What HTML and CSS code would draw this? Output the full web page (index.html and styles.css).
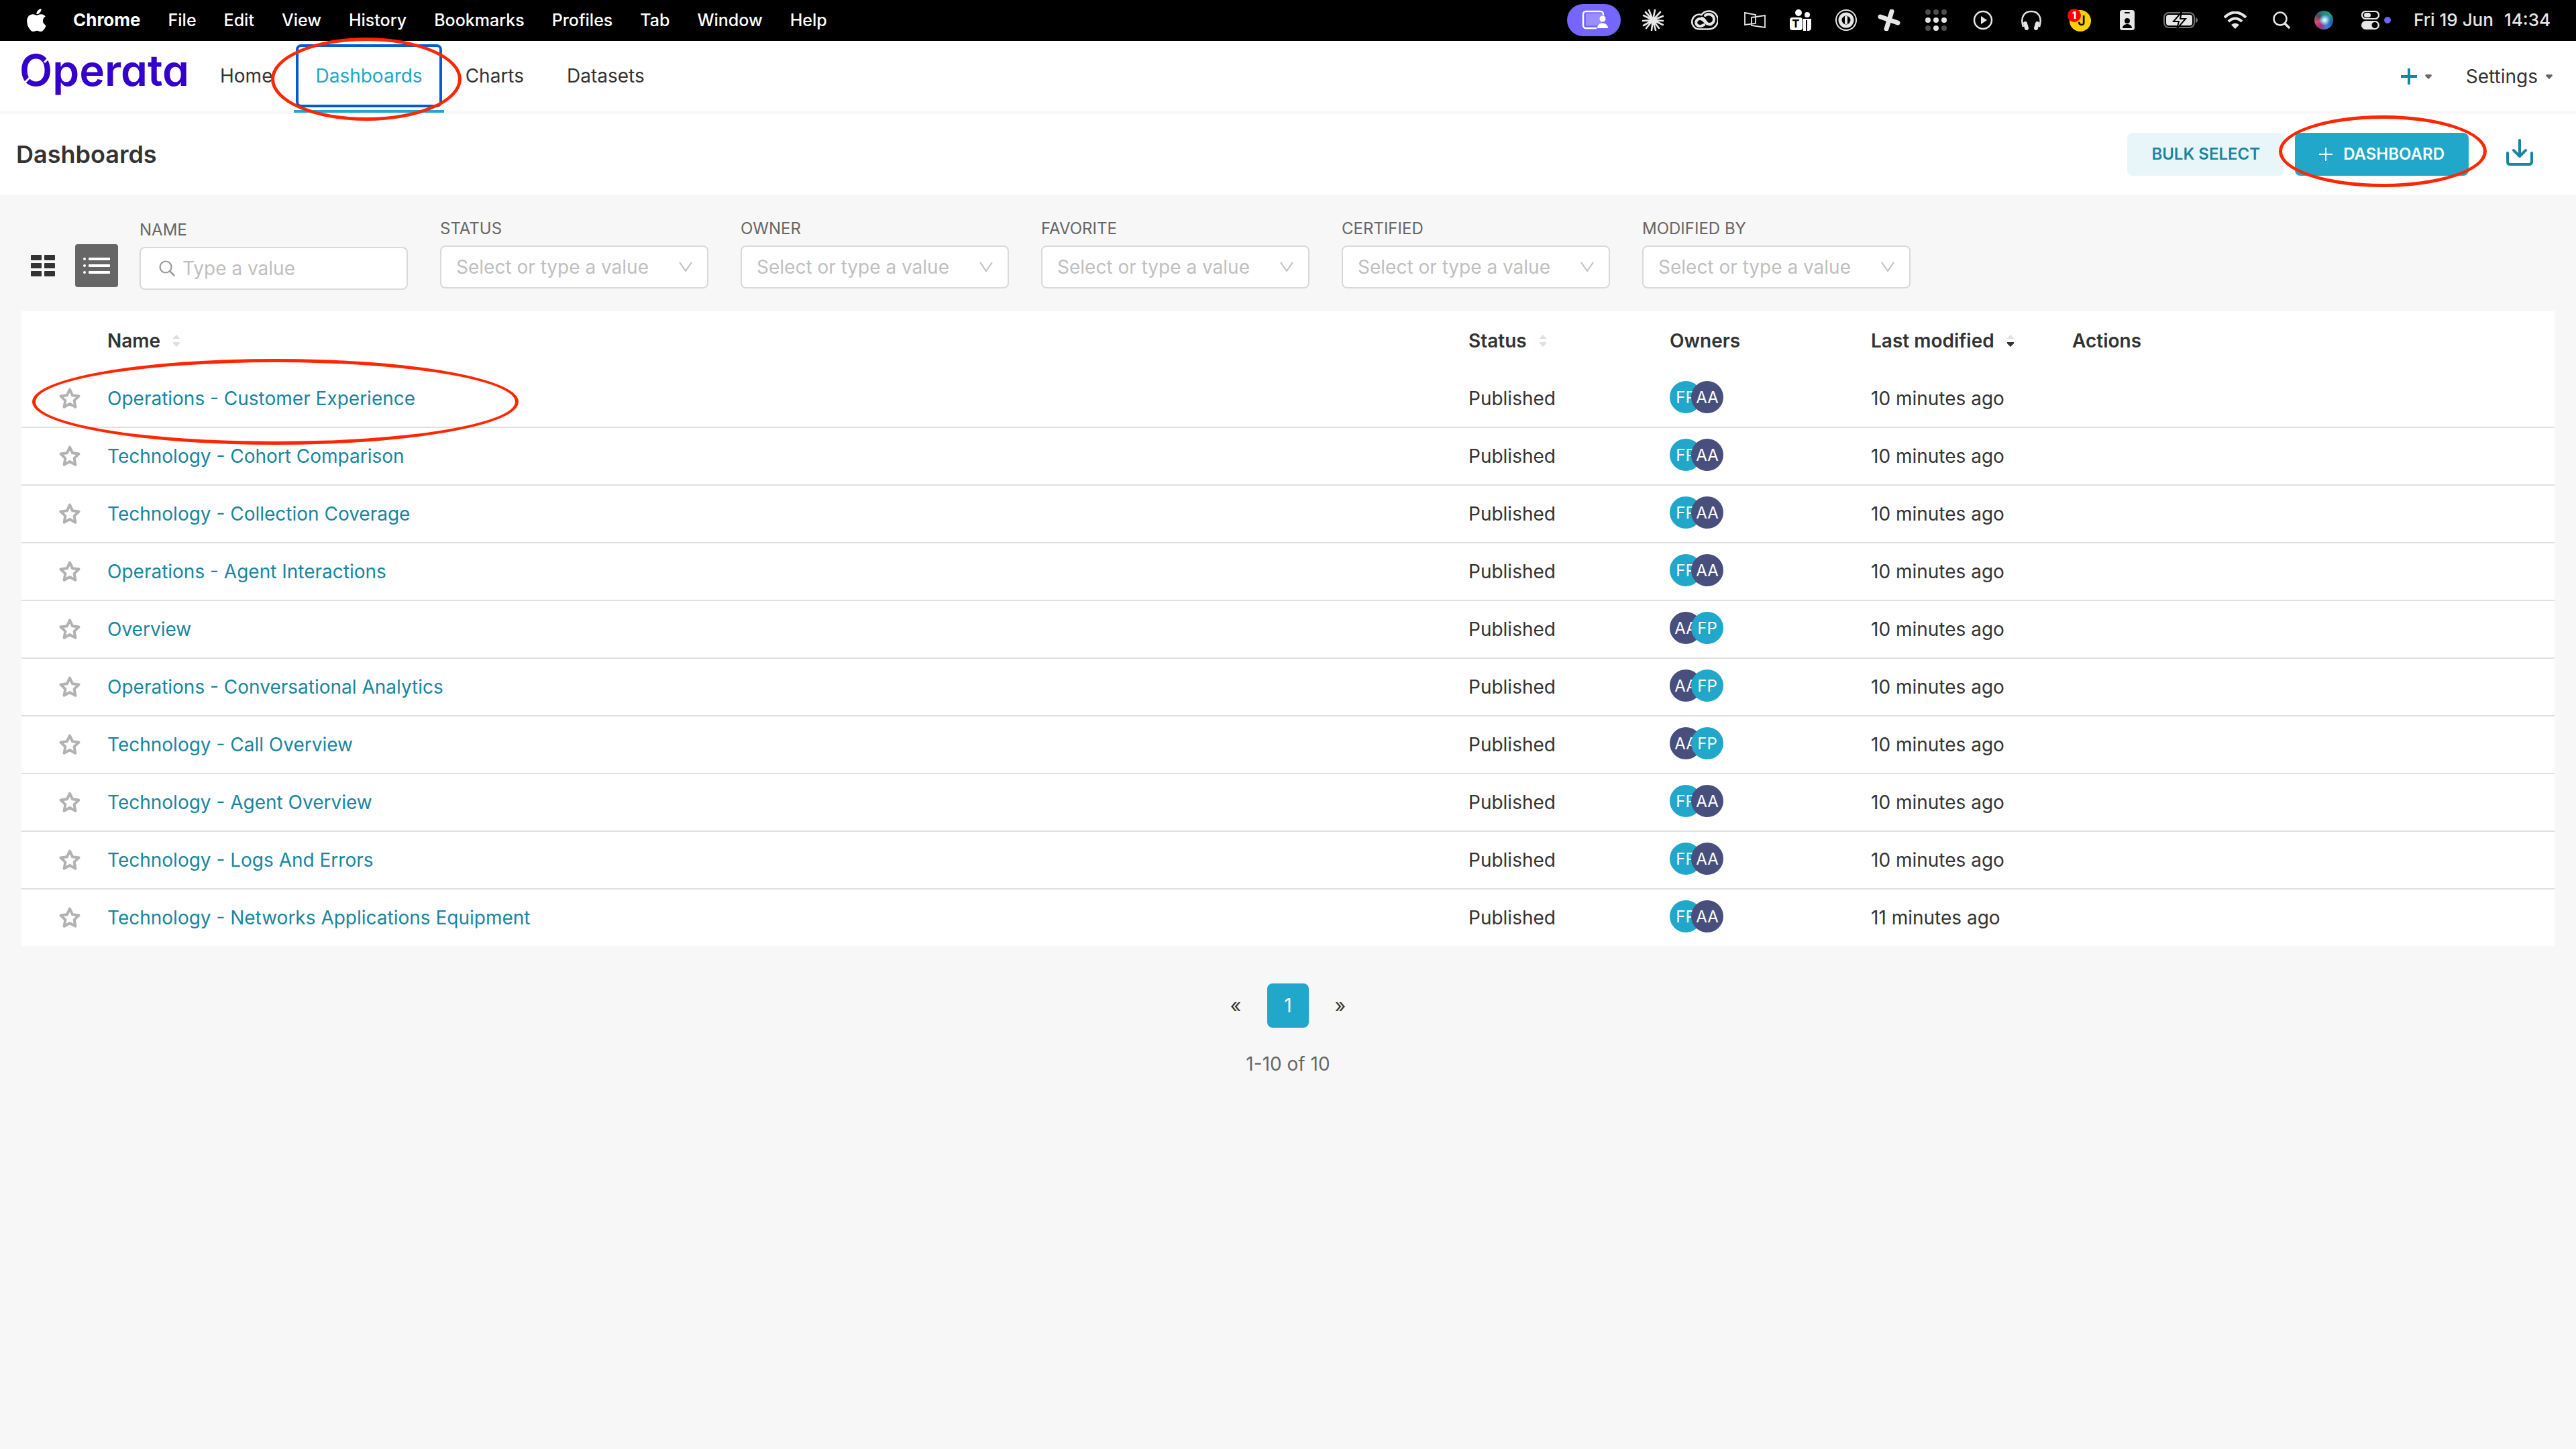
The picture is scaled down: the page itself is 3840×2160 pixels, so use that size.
FILE: index.html
```html
<!DOCTYPE html>
<html lang="en">
<head>
    <meta charset="UTF-8">
    <meta name="viewport" content="width=device-width, initial-scale=1.0">
    <title>Dashboards - Operata</title>
    <link rel="stylesheet" href="styles.css">
</head>
<body>
    <!-- shared icons -->
    <svg class="sprite" aria-hidden="true">
        <symbol id="star" viewBox="0 0 36 36">
            <path d="M18 4.500l4.100 8.800 9.400 1.200-6.900 6.600 1.800 9.600-8.400-4.700-8.400 4.700 1.800-9.600-6.900-6.600 9.400-1.200z" fill="none" stroke="#b2b2b2" stroke-width="4" stroke-linejoin="round"/>
        </symbol>
        <symbol id="chevron" viewBox="0 0 24 24">
            <path d="M3 5l9 13 9-13" fill="none" stroke="#bfbfbf" stroke-width="2"/>
        </symbol>
        <symbol id="caret" viewBox="0 0 12 8">
            <path d="M2 1h8l1 2-5 5-5-5z" fill="#666"/>
        </symbol>
        <symbol id="sort" viewBox="0 0 12 20">
            <path class="sort-up" d="M6 1l5 5v1H1V6z"/>
            <path class="sort-down" d="M6 19l5-5v-2H1v2z"/>
        </symbol>
    </svg>

    <!-- system menu bar -->
    <header class="menubar">
        <nav class="menubar-menu">
            <svg class="apple" viewBox="4 32 366 448"><path fill="#fff" d="M318.700 268.700c-.2-36.700 16.400-64.400 50-84.800-18.800-26.900-47.200-41.700-84.700-44.600-35.500-2.800-74.300 20.700-88.500 20.700-15 0-49.400-19.700-76.400-19.700C63.300 141.200 4 184.800 4 273.500q0 39.300 14.400 81.200c12.800 36.700 59 126.700 107.200 125.200 25.200-.6 43-17.900 75.800-17.900 31.800 0 48.300 17.900 76.400 17.900 48.600-.7 90.400-82.500 102.600-119.300-65.200-30.700-61.700-90-61.700-91.900zm-56.600-164.200c27.300-32.400 24.800-61.900 24-72.500-24.100 1.400-52 16.400-67.900 34.900-17.500 19.800-27.800 44.300-25.600 71.900 26.100 2 49.900-11.400 69.500-34.300z"/></svg>
            <span class="app-name">Chrome</span>
            <span>File</span>
            <span>Edit</span>
            <span>View</span>
            <span>History</span>
            <span>Bookmarks</span>
            <span>Profiles</span>
            <span>Tab</span>
            <span>Window</span>
            <span>Help</span>
        </nav>
        <div class="menubar-status">
            <div class="tray">
                <svg width="80" height="48" viewBox="0 0 80 48">
                    <rect width="80" height="48" rx="24" fill="#7466ff"/>
                    <rect x="28" y="14" width="24" height="18" fill="#988eff"/>
                    <path d="M54 17v-2a4 4 0 0 0-4-4H28a4 4 0 0 0-4 4v17a4 4 0 0 0 4 4h16" fill="none" stroke="#fff" stroke-width="2.500"/>
                    <circle cx="53" cy="22" r="4.500" fill="#fff"/>
                    <path d="M45 36c0-10 16-10 16 0z" fill="#fff"/>
                </svg>
                <svg width="32" height="32" viewBox="0 0 32 32">
                    <path d="M16 16L10 1M16 16L19 1M16 16L27 4M16 16L31 10M16 16L31 17M16 16L31 23M16 16L25 28M16 16L20 31M16 16L14 31M16 16L6 28M16 16L2 24M16 16L1 17M16 16L2 9M16 16L5 4" stroke="#e6e6e6" stroke-width="2.600" stroke-linecap="round"/>
                </svg>
                <svg width="40" height="30" viewBox="0 0 40 30">
                    <path d="M12 28.500h14a13.500 13.500 0 1 0-10.500-21.500A11 11 0 1 0 12 28.500z" fill="none" stroke="#e6e6e6" stroke-width="2.600"/>
                    <path d="M19 22c-8 5-14-1-11-6 3-5 9-3 12 1 4 6 14 5 14-3 0-7-8-10-13-6M16 12c5 0 6 12 14 9" fill="none" stroke="#e6e6e6" stroke-width="4" stroke-linecap="round"/>
                </svg>
                <svg width="32" height="24" viewBox="0 0 32 24">
                    <path d="M1 1l16 3v13l-16 2zM11 8l20-3v18l-20-3z" fill="none" stroke="#e6e6e6" stroke-width="1.800"/>
                </svg>
                <svg width="32" height="32" viewBox="0 0 32 32">
                    <circle cx="13" cy="5" r="5" fill="#fff"/>
                    <circle cx="26" cy="8" r="4" fill="#fff"/>
                    <path d="M20 14h12v13q0 5-5 5h-1V16h-2v16h-4z" fill="#fff"/>
                    <rect y="12" width="19" height="19" rx="4" fill="#fff"/>
                    <text x="9" y="27" class="glyph-t">T</text>
                </svg>
                <svg width="32" height="32" viewBox="0 0 32 32">
                    <circle cx="16" cy="16" r="15" fill="none" stroke="#e6e6e6" stroke-width="2"/>
                    <circle cx="16" cy="16" r="9" fill="none" stroke="#e6e6e6" stroke-width="5"/>
                    <rect x="14" y="10" width="4" height="12" rx="1" fill="#e6e6e6"/>
                </svg>
                <svg width="34" height="32" viewBox="0 0 34 32">
                    <path d="M21 3l-8 26M4 11l26 9" stroke="#e6e6e6" stroke-width="7" stroke-linecap="round"/>
                </svg>
                <svg width="32" height="32" viewBox="0 0 32 32" fill="#e6e6e6">
                    <g fill="#4d4d4d"><circle cx="4" cy="4" r="4"/><circle cx="16" cy="4" r="4"/><circle cx="28" cy="4" r="4"/><circle cx="4" cy="28" r="4"/><circle cx="28" cy="28" r="4"/></g>
                    <circle cx="4" cy="16" r="4"/><circle cx="16" cy="16" r="4"/><circle cx="28" cy="16" r="4"/><circle cx="16" cy="28" r="4"/>
                </svg>
                <svg width="30" height="30" viewBox="0 0 30 30">
                    <circle cx="15" cy="15" r="13" fill="none" stroke="#e6e6e6" stroke-width="2.500"/>
                    <path d="M12 9l9 6-9 6z" fill="#e6e6e6"/>
                </svg>
                <svg width="30" height="30" viewBox="0 0 30 30">
                    <path d="M3 25C-2 10 5 2 15 2s17 8 12 23" fill="none" stroke="#e6e6e6" stroke-width="2.500"/>
                    <path d="M6 20l2 7M24 20l-2 7" stroke="#e6e6e6" stroke-width="6" stroke-linecap="round"/>
                </svg>
                <svg width="36" height="34" viewBox="0 0 36 34">
                    <circle cx="19" cy="18" r="16" fill="#ffcf00"/>
                    <text x="21" y="25" class="glyph-j">J</text>
                    <circle cx="10" cy="10" r="10" fill="#f00"/>
                    <text x="10" y="15" class="glyph-badge">1</text>
                </svg>
                <svg width="22" height="30" viewBox="0 0 22 30">
                    <rect width="22" height="30" rx="4" fill="#e6e6e6"/>
                    <rect x="7" y="3" width="8" height="2" rx="1"/>
                    <circle cx="11" cy="16" r="4"/>
                    <path d="M4 27c0-8 14-8 14 0z"/>
                </svg>
                <svg width="52" height="26" viewBox="0 0 52 26">
                    <rect x="1" y="2" width="45" height="22" rx="7" fill="none" stroke="#737373" stroke-width="2"/>
                    <path d="M48 9q3 1 3 4t-3 4z" fill="#737373"/>
                    <rect x="4" y="5" width="39" height="16" rx="4" fill="#e6e6e6"/>
                    <path d="M27 1L15 15h8l-3 11 13-15h-8z" fill="#e6e6e6" stroke="#000" stroke-width="2"/>
                </svg>
                <svg width="34" height="26" viewBox="0 0 34 26">
                    <path d="M1 9q16-15 32 0M7 15q10-9 20 0" fill="none" stroke="#e6e6e6" stroke-width="4"/>
                    <path d="M11 20q6-5 12 0l-6 6z" fill="#e6e6e6"/>
                </svg>
                <svg width="26" height="26" viewBox="0 0 26 26">
                    <circle cx="11" cy="11" r="9.500" fill="none" stroke="#e6e6e6" stroke-width="2.500"/>
                    <path d="M18 18l6 6" stroke="#e6e6e6" stroke-width="3.500" stroke-linecap="round"/>
                </svg>
                <span class="siri"></span>
                <svg width="44" height="28" viewBox="0 0 44 28">
                    <rect x="1" y="1" width="25" height="11" rx="5.500" fill="none" stroke="#e6e6e6" stroke-width="2.200"/>
                    <rect x="4" y="3" width="10" height="7" rx="3.500" fill="#e6e6e6"/>
                    <rect y="15" width="27" height="13" rx="6.500" fill="#e6e6e6"/>
                    <circle cx="20" cy="21.500" r="4.500"/>
                    <circle cx="39" cy="14" r="5" fill="#6e62f0"/>
                </svg>
            </div>
            <time class="clock"><span>Fri 19 Jun</span><span>14:34</span></time>
        </div>
    </header>

    <!-- main navigation -->
    <nav class="navbar">
        <a class="logo" href="#" aria-label="Operata">
            <svg width="252" height="72" viewBox="0 0 252 72">
                <text x="-3" y="51">Operata</text>
                <path d="M43 7l-9 9M5 46l9-9" stroke="#fff" stroke-width="3"/>
            </svg>
        </a>
        <ul class="nav-list">
            <li><a href="#">Home</a></li>
            <li class="active"><a href="#">Dashboards</a><span class="marker marker-nav"></span></li>
            <li><a href="#">Charts</a></li>
            <li><a href="#">Datasets</a></li>
        </ul>
        <div class="nav-right">
            <button class="nav-button" aria-label="New">
                <svg width="24" height="24" viewBox="0 0 24 24"><path d="M12 0v24M0 12h24" stroke="#1985a0" stroke-width="4"/></svg>
                <svg class="caret"><use href="#caret"/></svg>
            </button>
            <button class="nav-button">Settings <svg class="caret"><use href="#caret"/></svg></button>
        </div>
    </nav>

    <section class="page-header">
        <h1>Dashboards</h1>
        <div class="page-actions">
            <button class="btn btn-secondary">Bulk select</button>
            <div class="btn-wrap">
                <button class="btn btn-primary">
                    <svg width="20" height="20" viewBox="0 0 20 20"><path d="M10 0v20M0 10h20" stroke="#fff" stroke-width="2"/></svg>
                    Dashboard
                </button>
                <span class="marker marker-button"></span>
            </div>
            <button class="btn-icon" aria-label="Import dashboards">
                <svg width="40" height="40" viewBox="0 0 40 40"><path d="M20 2v23M11 17l9 9 9-9M2 21v13q0 4 4 4h28q4 0 4-4V21" fill="none" stroke="#1985a0" stroke-width="4" stroke-linecap="round" stroke-linejoin="round"/></svg>
            </button>
        </div>
    </section>

    <main class="content">
        <div class="filters">
            <div class="view-toggle">
                <button aria-label="Card view">
                    <svg width="36" height="32" viewBox="0 0 36 32" fill="#333"><rect width="16" height="8" rx="1"/><rect x="20" width="16" height="8" rx="1"/><rect y="12" width="16" height="8" rx="1"/><rect x="20" y="12" width="16" height="8" rx="1"/><rect y="24" width="16" height="8" rx="1"/><rect x="20" y="24" width="16" height="8" rx="1"/></svg>
                </button>
                <button class="selected" aria-label="List view">
                    <svg width="40" height="24" viewBox="0 0 40 24" fill="#fff"><rect width="4" height="4" rx="2"/><rect x="8" width="32" height="4" rx="1"/><rect y="10" width="4" height="4" rx="2"/><rect x="8" y="10" width="32" height="4" rx="1"/><rect y="20" width="4" height="4" rx="2"/><rect x="8" y="20" width="32" height="4" rx="1"/></svg>
                </button>
            </div>
            <div class="filter filter-search">
                <label for="name">Name</label>
                <div class="field">
                    <svg class="search-icon" viewBox="0 0 24 24"><circle cx="10" cy="10" r="8.500" fill="none" stroke="#999" stroke-width="2.200"/><path d="M16 16l7 7" stroke="#999" stroke-width="2.600"/></svg>
                    <input type="text" id="name" placeholder="Type a value">
                </div>
            </div>
            <div class="filter">
                <label for="status">Status</label>
                <div class="field">
                    <select id="status"><option>Select or type a value</option></select>
                    <svg class="chevron"><use href="#chevron"/></svg>
                </div>
            </div>
            <div class="filter">
                <label for="owner">Owner</label>
                <div class="field">
                    <select id="owner"><option>Select or type a value</option></select>
                    <svg class="chevron"><use href="#chevron"/></svg>
                </div>
            </div>
            <div class="filter">
                <label for="favorite">Favorite</label>
                <div class="field">
                    <select id="favorite"><option>Select or type a value</option></select>
                    <svg class="chevron"><use href="#chevron"/></svg>
                </div>
            </div>
            <div class="filter">
                <label for="certified">Certified</label>
                <div class="field">
                    <select id="certified"><option>Select or type a value</option></select>
                    <svg class="chevron"><use href="#chevron"/></svg>
                </div>
            </div>
            <div class="filter">
                <label for="modifiedBy">Modified by</label>
                <div class="field">
                    <select id="modifiedBy"><option>Select or type a value</option></select>
                    <svg class="chevron"><use href="#chevron"/></svg>
                </div>
            </div>
        </div>

        <div class="table-wrap">
            <table class="dashboard-table">
                <thead>
                    <tr>
                        <th class="col-star"></th>
                        <th>Name <svg class="sort"><use href="#sort"/></svg></th>
                        <th class="col-data">Status <svg class="sort"><use href="#sort"/></svg></th>
                        <th class="col-data">Owners</th>
                        <th class="col-data">Last modified <svg class="sort sort-desc"><use href="#sort"/></svg></th>
                        <th class="col-actions">Actions</th>
                    </tr>
                </thead>
                <tbody>
                    <tr>
                        <td><svg class="star"><use href="#star"/></svg></td>
                        <td><a href="#">Operations - Customer Experience</a></td>
                        <td>Published</td>
                        <td><div class="owners"><span class="avatar fp">FP</span><span class="avatar aa">AA</span></div></td>
                        <td>10 minutes ago</td>
                        <td></td>
                    </tr>
                    <tr>
                        <td><svg class="star"><use href="#star"/></svg></td>
                        <td><a href="#">Technology - Cohort Comparison</a></td>
                        <td>Published</td>
                        <td><div class="owners"><span class="avatar fp">FP</span><span class="avatar aa">AA</span></div></td>
                        <td>10 minutes ago</td>
                        <td></td>
                    </tr>
                    <tr>
                        <td><svg class="star"><use href="#star"/></svg></td>
                        <td><a href="#">Technology - Collection Coverage</a></td>
                        <td>Published</td>
                        <td><div class="owners"><span class="avatar fp">FP</span><span class="avatar aa">AA</span></div></td>
                        <td>10 minutes ago</td>
                        <td></td>
                    </tr>
                    <tr>
                        <td><svg class="star"><use href="#star"/></svg></td>
                        <td><a href="#">Operations - Agent Interactions</a></td>
                        <td>Published</td>
                        <td><div class="owners"><span class="avatar fp">FP</span><span class="avatar aa">AA</span></div></td>
                        <td>10 minutes ago</td>
                        <td></td>
                    </tr>
                    <tr>
                        <td><svg class="star"><use href="#star"/></svg></td>
                        <td><a href="#">Overview</a></td>
                        <td>Published</td>
                        <td><div class="owners"><span class="avatar aa">AA</span><span class="avatar fp">FP</span></div></td>
                        <td>10 minutes ago</td>
                        <td></td>
                    </tr>
                    <tr>
                        <td><svg class="star"><use href="#star"/></svg></td>
                        <td><a href="#">Operations - Conversational Analytics</a></td>
                        <td>Published</td>
                        <td><div class="owners"><span class="avatar aa">AA</span><span class="avatar fp">FP</span></div></td>
                        <td>10 minutes ago</td>
                        <td></td>
                    </tr>
                    <tr>
                        <td><svg class="star"><use href="#star"/></svg></td>
                        <td><a href="#">Technology - Call Overview</a></td>
                        <td>Published</td>
                        <td><div class="owners"><span class="avatar aa">AA</span><span class="avatar fp">FP</span></div></td>
                        <td>10 minutes ago</td>
                        <td></td>
                    </tr>
                    <tr>
                        <td><svg class="star"><use href="#star"/></svg></td>
                        <td><a href="#">Technology - Agent Overview</a></td>
                        <td>Published</td>
                        <td><div class="owners"><span class="avatar fp">FP</span><span class="avatar aa">AA</span></div></td>
                        <td>10 minutes ago</td>
                        <td></td>
                    </tr>
                    <tr>
                        <td><svg class="star"><use href="#star"/></svg></td>
                        <td><a href="#">Technology - Logs And Errors</a></td>
                        <td>Published</td>
                        <td><div class="owners"><span class="avatar fp">FP</span><span class="avatar aa">AA</span></div></td>
                        <td>10 minutes ago</td>
                        <td></td>
                    </tr>
                    <tr>
                        <td><svg class="star"><use href="#star"/></svg></td>
                        <td><a href="#">Technology - Networks Applications Equipment</a></td>
                        <td>Published</td>
                        <td><div class="owners"><span class="avatar fp">FP</span><span class="avatar aa">AA</span></div></td>
                        <td>11 minutes ago</td>
                        <td></td>
                    </tr>
                </tbody>
            </table>
            <span class="marker marker-row"></span>
        </div>

        <div class="pagination">
            <button aria-label="Previous page">«</button>
            <button class="current">1</button>
            <button aria-label="Next page">»</button>
        </div>
        <p class="row-count">1-10 of 10</p>
    </main>
</body>
</html>
```

FILE: styles.css
```css
* {
    margin: 0;
    padding: 0;
    box-sizing: border-box;
}

body {
    font-family: Inter, "Liberation Sans", sans-serif;
    font-size: 28px;
    line-height: 40px;
    color: #333;
    background: #f7f7f7;
    min-height: 100vh;
}

button,
input,
select {
    font: inherit;
    color: inherit;
    border: none;
    background: none;
}

button {
    cursor: pointer;
}

a {
    color: #1985a0;
    text-decoration: none;
}

svg {
    flex-shrink: 0;
}

.sprite {
    position: absolute;
    width: 0;
    height: 0;
}

/* system menu bar */
.menubar {
    display: flex;
    justify-content: space-between;
    align-items: center;
    height: 61px;
    padding: 0 38px 2px 40px;
    background: #000;
    color: #fff;
    font-size: 26px;
    font-weight: 500;
}

.menubar-menu {
    display: flex;
    align-items: center;
    gap: 41px;
    font-size: 25px;
}

.apple {
    width: 28px;
    height: 34px;
}

.app-name {
    font-size: 26px;
    font-weight: 700;
}

.menubar-status {
    display: flex;
    align-items: center;
    gap: 18px;
    color: #e6e6e6;
}

.tray {
    display: grid;
    grid-template-columns: 96px 80px 74px 76px 60px 76px 52px 88px 52px 92px 52px 90px 70px 92px 46px 80px 76px;
    place-items: center;
}

.siri {
    width: 28px;
    height: 28px;
    border-radius: 50%;
    background: radial-gradient(circle at 55% 50%, #fff 0, #8fd0f0 18%, transparent 40%), conic-gradient(#1c8c80, #2a9a8a, #2d5fb0, #3b7fd0, #a03080, #d8506a, #4a4a60, #1c8c80);
}

.clock {
    display: flex;
    gap: 16px;
}

.glyph-t,
.glyph-j,
.glyph-badge {
    font-weight: 800;
    text-anchor: middle;
}

.glyph-t {
    font-size: 16px;
}

.glyph-j {
    font-size: 20px;
    font-weight: 600;
}

.glyph-badge {
    font-size: 14px;
    fill: #fff;
}

/* main navigation */
.navbar {
    display: flex;
    align-items: stretch;
    height: 109px;
    padding: 0 34px 0 32px;
    background: #fff;
    border-bottom: 4px solid #f7f7f7;
}

.logo {
    display: flex;
    margin-top: 16px;
    margin-right: 12px;
}

.logo svg {
    overflow: visible;
}

.logo text {
    font-size: 64px;
    font-weight: 600;
    font-feature-settings: "cv11";
    fill: #3300cc;
}

.nav-list {
    display: flex;
    list-style: none;
}

.nav-list li {
    position: relative;
    padding: 5px 3px;
}

.nav-list a {
    display: flex;
    align-items: center;
    height: 94px;
    padding: 0 25px;
    border: 4px solid transparent;
    border-radius: 8px;
    color: #333;
}

.nav-list .active a {
    color: #20a7c9;
    border-color: #005cd4;
}

.nav-list .active::after {
    content: "";
    position: absolute;
    left: 0;
    right: 0;
    bottom: -2px;
    height: 4px;
    background: #20a7c9;
}

.nav-right {
    display: flex;
    gap: 50px;
    margin-left: auto;
}

.nav-button {
    display: flex;
    align-items: center;
    gap: 11px;
}

.caret {
    width: 12px;
    height: 8px;
}

/* hand drawn highlights */
.marker {
    position: absolute;
    z-index: 2;
    border: 5px solid #ff2600;
    border-radius: 50%;
    pointer-events: none;
}

.marker-nav {
    inset: -5px -26px -14px -34px;
}

.marker-button {
    inset: -26px -27px -17px -24px;
}

.marker-row {
    top: 71px;
    left: 16px;
    width: 725px;
    height: 128px;
}

/* page header */
.page-header {
    display: flex;
    justify-content: space-between;
    align-items: center;
    padding: 28px 64px 28px 24px;
    background: #fff;
}

.page-header h1 {
    font-size: 36px;
    font-weight: 600;
}

.page-actions {
    display: flex;
    gap: 16px;
}

.btn-wrap {
    position: relative;
}

.btn {
    display: flex;
    align-items: center;
    gap: 16px;
    height: 64px;
    padding: 0 36px;
    border-radius: 8px;
    font-size: 24px;
    font-weight: 600;
    text-transform: uppercase;
}

.btn-secondary {
    background: #e9f6f9;
    color: #1985a0;
}

.btn-primary {
    background: #20a7c9;
    color: #fff;
}

.btn-icon {
    display: flex;
    align-items: center;
    margin-left: 40px;
    padding-bottom: 6px;
}

/* filters */
.content {
    padding: 34px 32px;
}

.filters {
    display: flex;
    align-items: flex-start;
    gap: 48px;
    padding-bottom: 32px;
}

.view-toggle {
    display: flex;
    gap: 16px;
    margin-top: 40px;
    margin-right: -16px;
}

.view-toggle button {
    display: flex;
    align-items: center;
    justify-content: center;
    width: 64px;
    height: 64px;
    border-radius: 4px;
}

.view-toggle .selected {
    background: #666;
}

.filter {
    width: 400px;
}

.filter-search {
    margin-top: 2px;
}

.filter label {
    display: block;
    margin-bottom: 8px;
    font-size: 24px;
    line-height: 34px;
    color: #666;
    text-transform: uppercase;
}

.field {
    position: relative;
}

.field input,
.field select {
    display: block;
    width: 100%;
    height: 64px;
    padding: 0 22px;
    background: #fff;
    border: 2px solid #d9d9d9;
    border-radius: 8px;
    color: #bfbfbf;
    appearance: none;
}

.field input {
    padding-left: 62px;
}

.field input::placeholder {
    color: #bfbfbf;
}

.search-icon,
.chevron {
    position: absolute;
    top: 20px;
    width: 24px;
    height: 24px;
    pointer-events: none;
}

.search-icon {
    left: 29px;
}

.chevron {
    right: 22px;
}

/* dashboards table */
.table-wrap {
    position: relative;
}

.dashboard-table {
    width: 100%;
    table-layout: fixed;
    border-collapse: separate;
    border-spacing: 0;
    background: #fff;
}

.dashboard-table th {
    height: 88px;
    text-align: left;
    font-weight: 600;
}

.dashboard-table td {
    height: 86px;
    border-bottom: 2px solid #e0e0e0;
}

.dashboard-table tr:last-child td {
    height: 84px;
    border-bottom: none;
}

.col-star {
    width: 128px;
}

.col-data {
    width: 300px;
}

.col-actions {
    width: 719px;
}

.sort {
    width: 12px;
    height: 20px;
    margin-left: 11px;
    fill: #e0e0e0;
}

.sort-desc {
    --down: #333;
}

.sort-down {
    fill: var(--down, #e0e0e0);
}

.star {
    display: block;
    width: 36px;
    height: 36px;
    margin-left: 54px;
}

.owners {
    display: flex;
    padding-bottom: 4px;
}

.avatar {
    width: 48px;
    height: 48px;
    border-radius: 50%;
    color: #fff;
    font-size: 24px;
    line-height: 50px;
    text-align: center;
}

.avatar + .avatar {
    margin-left: -16px;
}

.fp {
    background: #20a7c9;
}

.aa {
    background: #484f7d;
}

/* pagination */
.pagination {
    display: flex;
    justify-content: center;
    gap: 16px;
    padding-top: 56px;
}

.pagination button {
    width: 62px;
    height: 66px;
    border-radius: 8px;
}

.pagination .current {
    background: #20a7c9;
    color: #fff;
}

.row-count {
    margin-top: 34px;
    text-align: center;
    color: #666;
}
```
